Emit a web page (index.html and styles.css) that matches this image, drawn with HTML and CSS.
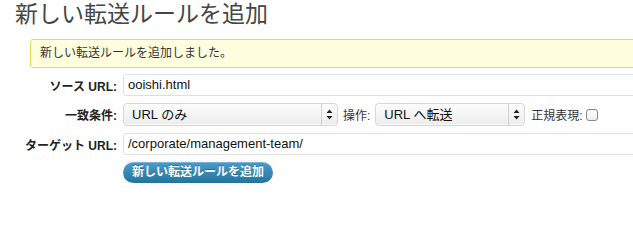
FILE: index.html
```html
<!DOCTYPE html>
<html lang="ja">
<head>
<meta charset="utf-8">
<title>新しい転送ルールを追加</title>
<link rel="stylesheet" href="styles.css">
</head>
<body>
<div class="page">
  <h2 class="title">新しい転送ルールを追加</h2>
  <div class="notice">新しい転送ルールを追加しました。</div>
  <div class="form">
    <div class="label">ソース URL:</div>
    <div class="input">ooishi.html</div>

    <div class="label">一致条件:</div>
    <div class="field-row">
      <div class="select sel-match"><span class="sel-text">URL のみ</span><span class="sel-arrow"><svg width="7" height="11" viewBox="0 0 7 11"><path d="M3.5 0.5 L6.5 4 L0.5 4 Z M3.5 10.5 L6.5 7 L0.5 7 Z" fill="#222"/></svg></span></div>
      <span class="inline-label">操作:</span>
      <div class="select sel-action"><span class="sel-text">URL へ転送</span><span class="sel-arrow"><svg width="7" height="11" viewBox="0 0 7 11"><path d="M3.5 0.5 L6.5 4 L0.5 4 Z M3.5 10.5 L6.5 7 L0.5 7 Z" fill="#222"/></svg></span></div>
      <span class="inline-label regex">正規表現:</span>
      <span class="checkbox"></span>
    </div>

    <div class="label">ターゲット URL:</div>
    <div class="input">/corporate/management-team/</div>

    <div></div>
    <div class="btn-row"><span class="button">新しい転送ルールを追加</span></div>
  </div>
</div>
</body>
</html>
```
FILE: styles.css
```css
html, body {
  margin: 0;
  padding: 0;
  background: #fff;
  overflow: hidden;
}
body {
  font-family: "Liberation Sans", "Noto Sans CJK JP", sans-serif;
  color: #333;
}
.page {
  width: 633px;
  overflow: hidden;
}
.title {
  margin: 0 0 0 15px;
  font-size: 23px;
  line-height: 28px;
  font-weight: normal;
  color: #464646;
  font-family: "Liberation Sans", "Noto Sans CJK JP", sans-serif;
}
.notice {
  margin: 11px -12px 0 30px;
  height: 27px;
  line-height: 27px;
  border: 1px solid #e6db55;
  border-radius: 3px;
  background: #ffffe0;
  padding-left: 9px;
  font-size: 12px;
  color: #333;
}
.form {
  margin-top: 6px;
  display: grid;
  grid-template-columns: 117px 1fr;
  column-gap: 6px;
  row-gap: 7px;
  align-items: center;
  margin-right: -12px;
}
.label {
  text-align: right;
  font-weight: bold;
  font-size: 12px;
  color: #222;
}
.input {
  height: 20px;
  line-height: 20px;
  border: 1px solid #dfdfdf;
  border-radius: 3px;
  padding-left: 4px;
  font-size: 13px;
  color: #111;
  background: #fff;
}
.field-row {
  display: flex;
  align-items: center;
  height: 23px;
}
.select {
  display: flex;
  height: 21px;
  border: 1px solid #d6d6d6;
  border-radius: 4px;
  background: linear-gradient(#fdfdfd, #ececec);
  box-shadow: inset 0 -1px 0 #f8f8f8;
  font-size: 13px;
  color: #111;
}
.sel-match { width: 213px; }
.sel-action { width: 148px; }
.sel-text {
  flex: 1;
  line-height: 21px;
  padding-left: 8px;
}
.sel-arrow {
  width: 15px;
  border-left: 1px solid #d0d0d0;
  display: flex;
  align-items: center;
  justify-content: center;
}
.inline-label {
  font-size: 12px;
  color: #333;
  margin: 0 5px 0 5px;
}
.regex {
  margin-left: 6px;
  margin-right: 3px;
}
.checkbox {
  width: 10px;
  height: 10px;
  border: 1px solid #8a8a8a;
  border-radius: 3px;
  background: linear-gradient(#fff, #eee);
}
.btn-row {
  display: flex;
}
.button {
  display: inline-block;
  width: 150px;
  height: 21px;
  line-height: 21px;
  text-align: center;
  border-radius: 11px;
  background: linear-gradient(#4a9ccc, #21759b);
  border: 0;
  color: #fff;
  font-weight: bold;
  font-size: 12px;
  box-shadow: inset 0 1px 0 rgba(255,255,255,0.25);
  text-shadow: 0 -1px 0 rgba(0,0,0,0.3);
}
```
